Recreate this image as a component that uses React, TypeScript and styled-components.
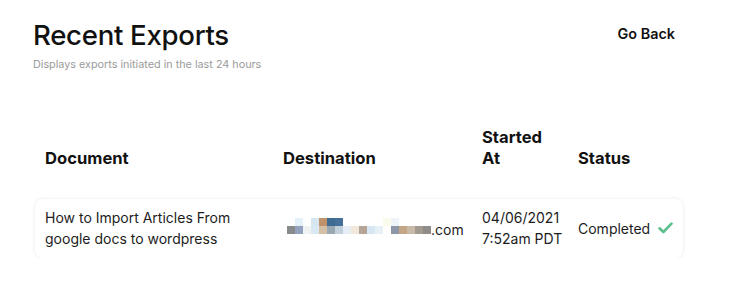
import type { FC } from 'react'
import styled, { createGlobalStyle } from 'styled-components'

const GlobalStyle = createGlobalStyle`
  html, body {
    margin: 0;
    padding: 0;
    background: #ffffff;
  }
  body {
    font-family: 'Inter', 'Noto Sans', sans-serif;
    color: #141414;
  }
`

// ─── Layout ────────────────────────────────────────────────────────────────────

const Page = styled.div`
  width: 730px;
  box-sizing: border-box;
  padding: 17px 55px 0 33px;
`

const TopBar = styled.div`
  display: flex;
  justify-content: space-between;
  align-items: flex-start;
`

const TitleBlock = styled.div`
  display: flex;
  flex-direction: column;
  gap: 5px;
`

const Title = styled.h1`
  margin: 0;
  font-size: 27.6px;
  line-height: 36px;
  font-weight: 500;
  letter-spacing: -0.3px;
  color: #111;
`

const Subtitle = styled.p`
  margin: 0;
  font-size: 10.8px;
  line-height: 14px;
  color: #9b9b9b;
`

const GoBack = styled.button`
  margin-top: 8px;
  padding: 0;
  border: none;
  background: none;
  font-family: inherit;
  font-size: 14.4px;
  font-weight: 600;
  color: #111;
  cursor: pointer;
`

// ─── Table ─────────────────────────────────────────────────────────────────────

const COLUMNS = '238px 199px 96px 1fr'

const Table = styled.div`
  margin: 55px -8px 0 2px;
  display: flex;
  flex-direction: column;
  gap: 30px;
`

const HeadRow = styled.div`
  display: grid;
  grid-template-columns: ${COLUMNS};
  align-items: end;
  padding: 0 10px;
`

const HeadCell = styled.div`
  font-size: 16.6px;
  line-height: 21px;
  font-weight: 700;
  color: #111;
`

const Row = styled.div`
  display: grid;
  grid-template-columns: ${COLUMNS};
  align-items: center;
  padding: 8px 10px 9px;
  border-radius: 8px;
  background: #fff;
  box-shadow: 0 0 4px rgba(0, 0, 0, 0.09);
`

const Cell = styled.div`
  font-size: 14px;
  line-height: 21px;
  color: #1d1d1d;
`

const StatusCell = styled(Cell)`
  display: flex;
  align-items: center;
  gap: 8px;
`

// ─── Pixelated destination ─────────────────────────────────────────────────────

const Destination = styled.div`
  display: flex;
  align-items: flex-end;
  padding-left: 4px;
  font-size: 14px;
  color: #1d1d1d;
`

const Mosaic = styled.div`
  display: grid;
  grid-template-columns: repeat(18, 8px);
  grid-auto-rows: 8px;
  margin-bottom: 4px;
`

const Tile = styled.span<{ $c: string }>`
  background: ${({ $c }) => $c};
`

const TOP = [
  '#fff', '#e4f1f8', '#fff', '#d6e6f1', '#c0926c', '#3f6a92', '#46709a', '#fff', '#fff',
  '#fff', '#fff', '#fff', '#fbfbec', '#eef4fa', '#fff', '#fff', '#fff', '#fff',
]
const BOTTOM = [
  '#898a8c', '#93a2be', '#f1f2f4', '#d9e8f2', '#d4c0a6', '#9aa9b1', '#c2d0dc', '#e7eef5', '#f2e8dc',
  '#b6a597', '#d6e6f2', '#e7f0f5', '#ffffff', '#8e97a7', '#c2a686', '#c8b9a9', '#a39a92', '#8f8c8a',
]

const CheckIcon: FC = () => (
  <svg width="15" height="12" viewBox="0 0 15 12" fill="none">
    <polyline
      points="1.5,6.3 5.4,10 13.5,1.6"
      stroke="#5cbf8c"
      strokeWidth="2.6"
      strokeLinecap="round"
      strokeLinejoin="round"
    />
  </svg>
)

// ─── Component ─────────────────────────────────────────────────────────────────

const App: FC = () => (
  <>
    <GlobalStyle />
    <Page>
      <TopBar>
        <TitleBlock>
          <Title>Recent Exports</Title>
          <Subtitle>Displays exports initiated in the last 24 hours</Subtitle>
        </TitleBlock>
        <GoBack>Go Back</GoBack>
      </TopBar>

      <Table>
        <HeadRow>
          <HeadCell>Document</HeadCell>
          <HeadCell>Destination</HeadCell>
          <HeadCell>
            Started
            <br />
            At
          </HeadCell>
          <HeadCell>Status</HeadCell>
        </HeadRow>

        <Row>
          <Cell>
            How to Import Articles From
            <br />
            google docs to wordpress
          </Cell>
          <Destination>
            <Mosaic>
              {[...TOP, ...BOTTOM].map((c, i) => (
                <Tile key={i} $c={c} />
              ))}
            </Mosaic>
            <span>.com</span>
          </Destination>
          <Cell>
            04/06/2021
            <br />
            7:52am PDT
          </Cell>
          <StatusCell>
            Completed
            <CheckIcon />
          </StatusCell>
        </Row>
      </Table>
    </Page>
  </>
)

export default App
